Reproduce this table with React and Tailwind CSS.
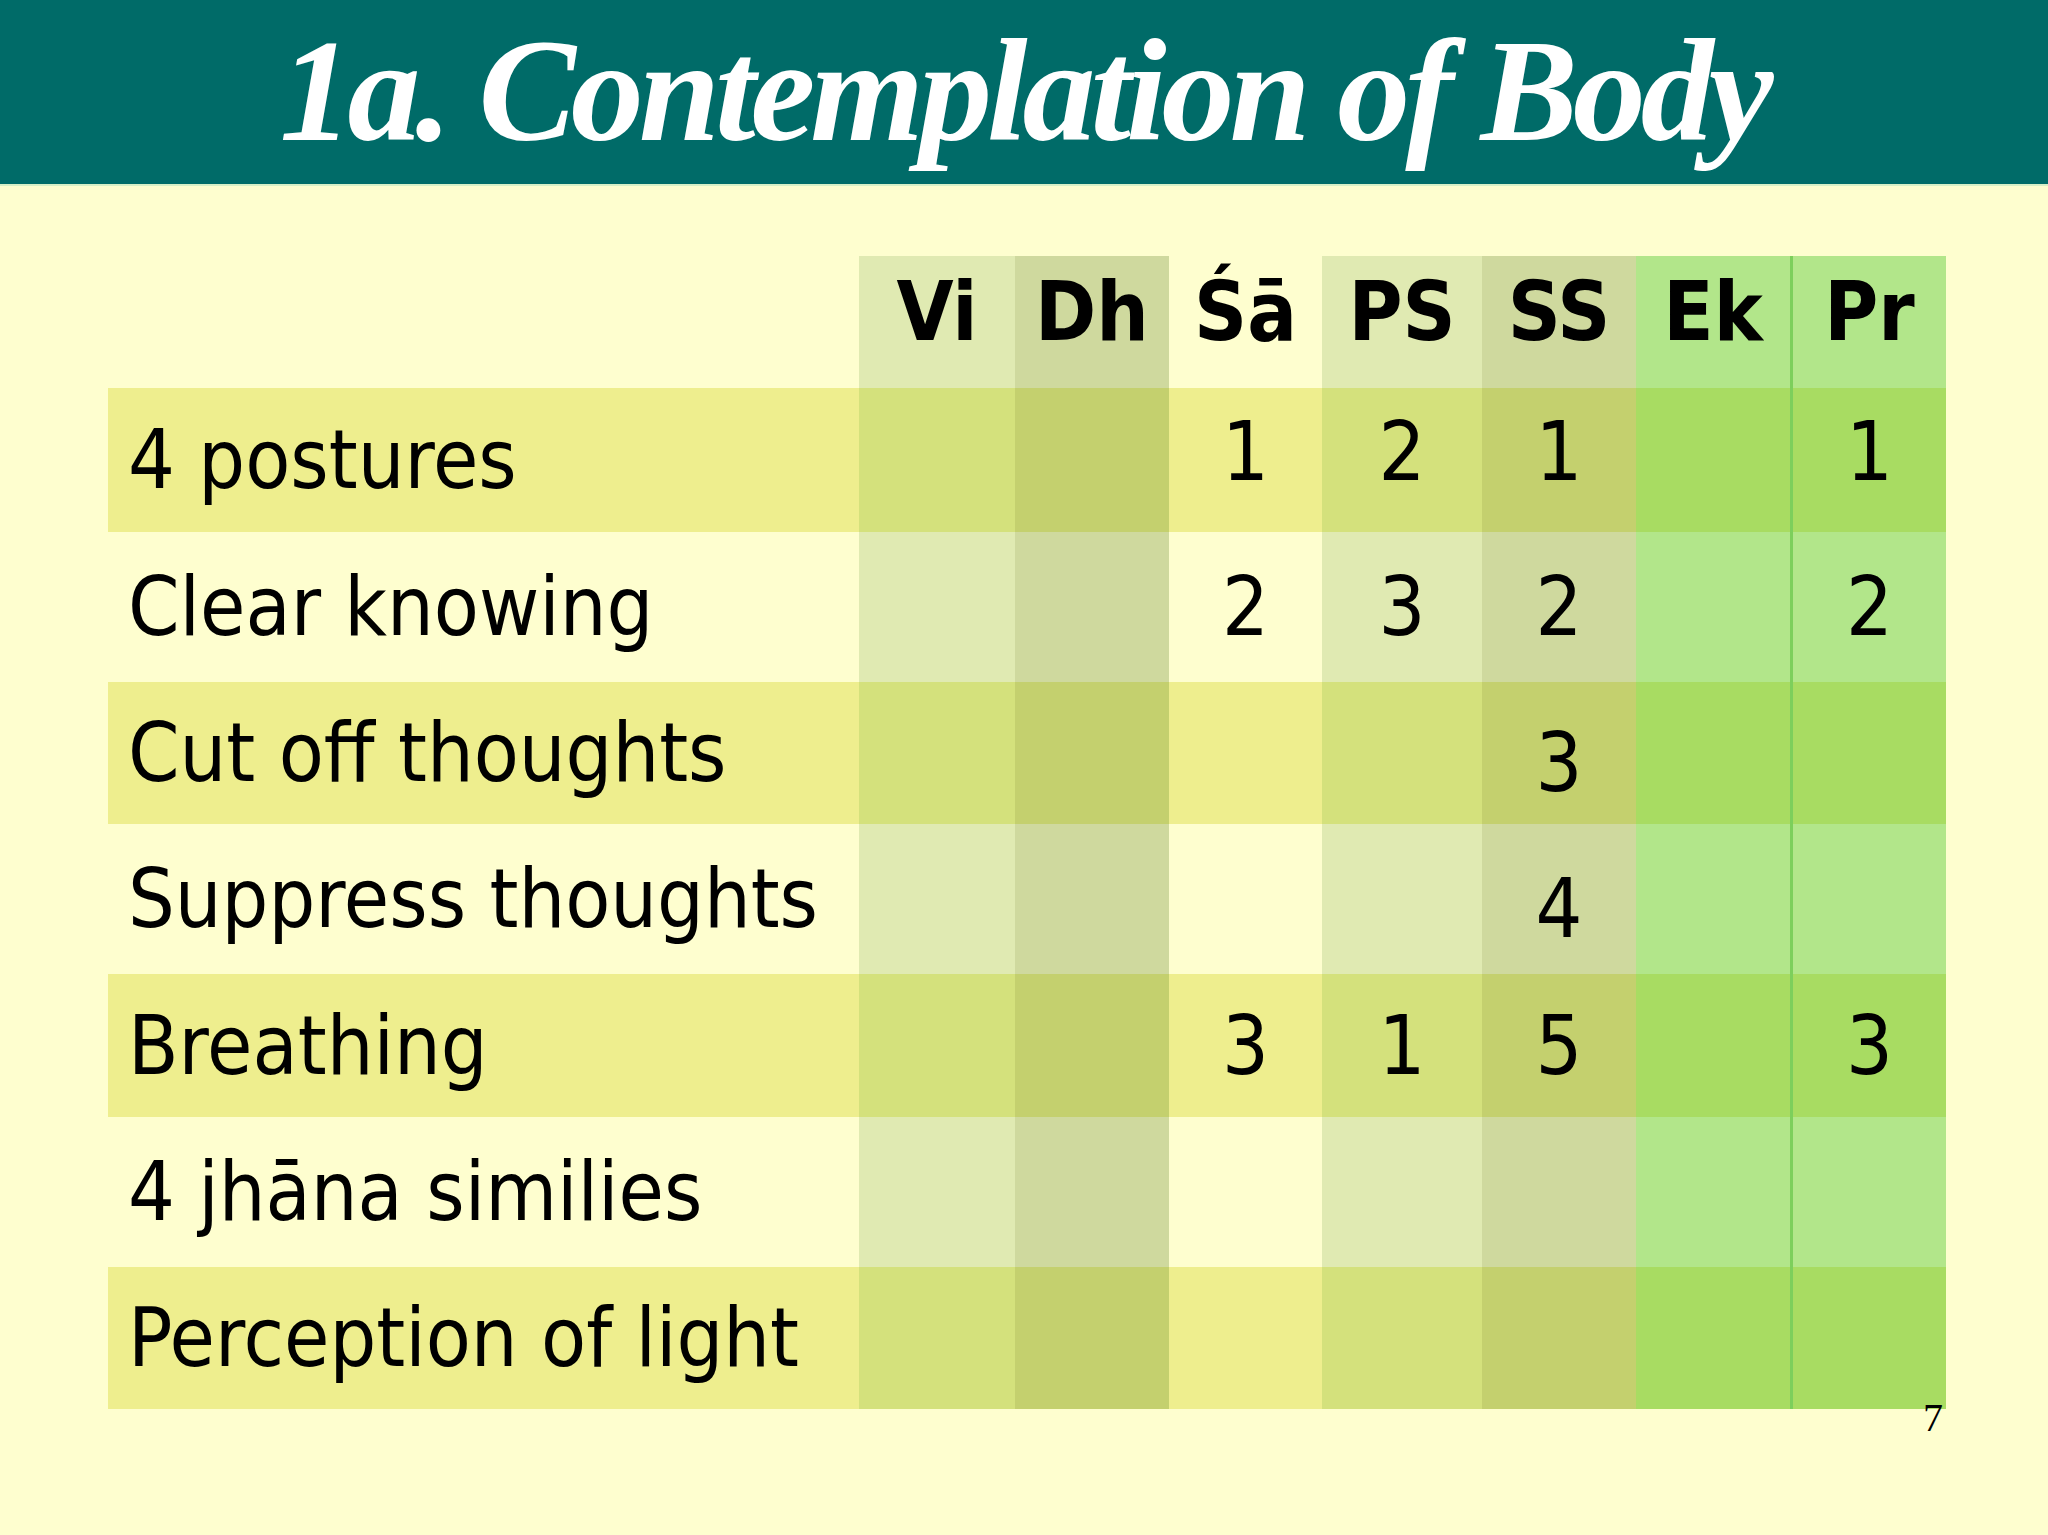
import React from "react";

const BG = "bg-[#fefecf]";

// column shades: [headerAndEvenRow, oddRow]
const cols = [
  { key: "Vi", even: "bg-[#e0eab2]", odd: "bg-[#d4e17c]" },
  { key: "Dh", even: "bg-[#cfd99e]", odd: "bg-[#c4d06e]" },
  { key: "Śā", even: "bg-[#fefecf]", odd: "bg-[#eeee8e]" },
  { key: "PS", even: "bg-[#e0eab2]", odd: "bg-[#d4e17c]" },
  { key: "SS", even: "bg-[#cfd99e]", odd: "bg-[#c4d06e]" },
  { key: "Ek", even: "bg-[#b2e68a]", odd: "bg-[#a8dc62]" },
  { key: "Pr", even: "bg-[#b2e68a] border-l-[3px] border-[#7dcf5c]", odd: "bg-[#a8dc62] border-l-[3px] border-[#7dcf5c]" },
];

const rows = [
  { label: "4 postures", h: "h-[144px]", vals: ["", "", "1", "2", "1", "", "1"], shift: "pb-[16px]" },
  { label: "Clear knowing", h: "h-[150px]", vals: ["", "", "2", "3", "2", "", "2"], shift: "" },
  { label: "Cut off thoughts", h: "h-[142px]", vals: ["", "", "", "", "3", "", ""], shift: "pt-[20px]" },
  { label: "Suppress thoughts", h: "h-[150px]", vals: ["", "", "", "", "4", "", ""], shift: "pt-[20px]" },
  { label: "Breathing", h: "h-[143px]", vals: ["", "", "3", "1", "5", "", "3"], shift: "" },
  { label: "4 jhāna similies", h: "h-[150px]", vals: ["", "", "", "", "", "", ""], shift: "" },
  { label: "Perception of light", h: "h-[142px]", vals: ["", "", "", "", "", "", ""], shift: "" },
];

const grid = "grid grid-cols-[751px_156px_154px_153px_160px_154px_154px_156px]";

export default function App() {
  return (
    <div className={`w-[2048px] h-[1535px] ${BG} overflow-hidden`}>
      <div className="h-[186px] bg-[#006b68] border-b-2 border-[#d6efc6] flex justify-center pt-[18px]">
        <h1 className="font-['Liberation_Serif',serif] italic font-bold text-white text-[146px] leading-none tracking-[-5px]">
          1a. Contemplation of Body
        </h1>
      </div>

      <div className="pl-[108px] pt-[70px] font-['DejaVu_Sans_Condensed','DejaVu_Sans',sans-serif] text-black">
        <div className={grid}>
          <div className="h-[132px]" />
          {cols.map((c) => (
            <div key={c.key} className={`h-[132px] ${c.even} flex items-center justify-center pb-[20px] text-[82px] font-bold leading-none`}>
              {c.key}
            </div>
          ))}

          {rows.map((r, i) => {
            const odd = i % 2 === 0;
            return (
              <React.Fragment key={r.label}>
                <div className={`${r.h} ${odd ? "bg-[#eeee8e]" : ""} flex items-center pl-[20px] text-[82px] leading-none`}>
                  {r.label}
                </div>
                {cols.map((c, j) => (
                  <div key={c.key} className={`${r.h} ${odd ? c.odd : c.even} ${r.shift} flex items-center justify-center text-[82px] leading-none`}>
                    {r.vals[j]}
                  </div>
                ))}
              </React.Fragment>
            );
          })}
        </div>
        <div className="w-[1838px] -mt-[11px] pr-[3px] text-right font-['Liberation_Serif',serif] text-[40px] leading-none">
          7
        </div>
      </div>
    </div>
  );
}
